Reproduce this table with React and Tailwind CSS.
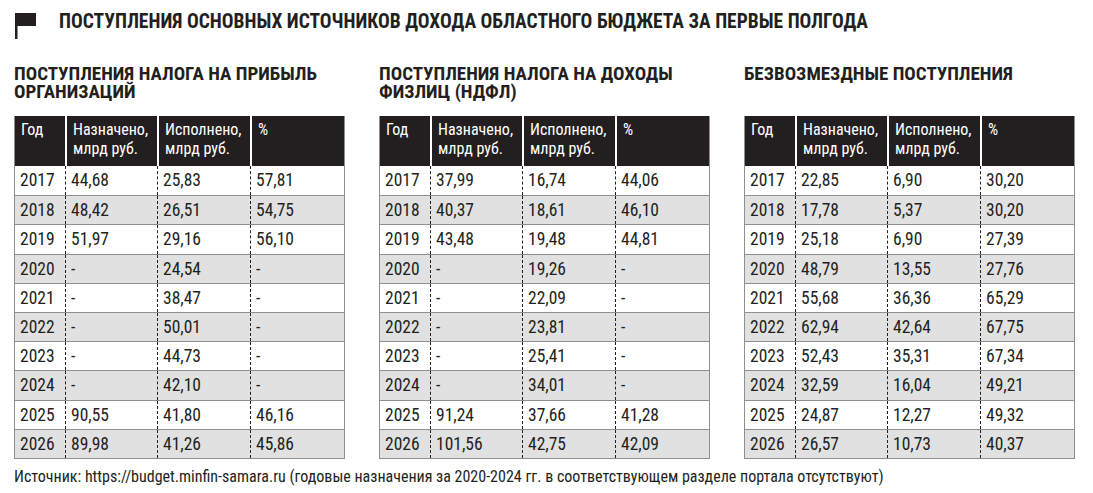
import React from 'react';

const tables = [
  {
    title: ['ПОСТУПЛЕНИЯ НАЛОГА НА ПРИБЫЛЬ', 'ОРГАНИЗАЦИЙ'],
    rows: [
      ['2017', '44,68', '25,83', '57,81'],
      ['2018', '48,42', '26,51', '54,75'],
      ['2019', '51,97', '29,16', '56,10'],
      ['2020', '-', '24,54', '-'],
      ['2021', '-', '38,47', '-'],
      ['2022', '-', '50,01', '-'],
      ['2023', '-', '44,73', '-'],
      ['2024', '-', '42,10', '-'],
      ['2025', '90,55', '41,80', '46,16'],
      ['2026', '89,98', '41,26', '45,86'],
    ],
  },
  {
    title: ['ПОСТУПЛЕНИЯ НАЛОГА НА ДОХОДЫ', 'ФИЗЛИЦ (НДФЛ)'],
    rows: [
      ['2017', '37,99', '16,74', '44,06'],
      ['2018', '40,37', '18,61', '46,10'],
      ['2019', '43,48', '19,48', '44,81'],
      ['2020', '-', '19,26', '-'],
      ['2021', '-', '22,09', '-'],
      ['2022', '-', '23,81', '-'],
      ['2023', '-', '25,41', '-'],
      ['2024', '-', '34,01', '-'],
      ['2025', '91,24', '37,66', '41,28'],
      ['2026', '101,56', '42,75', '42,09'],
    ],
  },
  {
    title: ['БЕЗВОЗМЕЗДНЫЕ ПОСТУПЛЕНИЯ'],
    rows: [
      ['2017', '22,85', '6,90', '30,20'],
      ['2018', '17,78', '5,37', '30,20'],
      ['2019', '25,18', '6,90', '27,39'],
      ['2020', '48,79', '13,55', '27,76'],
      ['2021', '55,68', '36,36', '65,29'],
      ['2022', '62,94', '42,64', '67,75'],
      ['2023', '52,43', '35,31', '67,34'],
      ['2024', '32,59', '16,04', '49,21'],
      ['2025', '24,87', '12,27', '49,32'],
      ['2026', '26,57', '10,73', '40,37'],
    ],
  },
];

const cols = 'grid grid-cols-[50px_92px_93px_1fr]';

function Flag() {
  return (
    <svg width="22" height="27" viewBox="0 0 22 27" className="shrink-0">
      <rect x="0" y="1" width="21" height="13" fill="#231f20" />
      <rect x="0" y="1" width="2.5" height="26" fill="#231f20" />
    </svg>
  );
}

function DataTable({ table }) {
  return (
    <div>
      <div className="h-[51px] text-[19px] font-bold leading-[18px]">
        {table.title.map(line => (
          <div key={line}>{line}</div>
        ))}
      </div>
      <div className="border-x border-b border-[#8f8f8f]">
        <div className={`${cols} h-[50px] bg-[#231f20] text-white text-[16px] leading-[19px]`}>
          <div className="px-[6px] pt-[4px]">Год</div>
          <div className="border-l-2 border-white px-[6px] pt-[4px]">Назначено,<br />млрд руб.</div>
          <div className="border-l-2 border-white px-[6px] pt-[4px]">Исполнено,<br />млрд руб.</div>
          <div className="border-l-2 border-white px-[6px] pt-[4px]">%</div>
        </div>
        {table.rows.map((r, i) => (
          <div
            key={r[0]}
            className={`${cols} h-[29.2px] text-[17.5px] leading-[28px] ${i % 2 ? 'bg-[#e1e1e1]' : 'bg-white'} ${i > 0 ? 'border-t border-[#8f8f8f]' : ''}`}
          >
            <div className="pl-[5px]">{r[0]}</div>
            <div className="border-l border-dashed border-[#231f20] pl-[5px]">{r[1]}</div>
            <div className="border-l border-dashed border-[#231f20] pl-[5px]">{r[2]}</div>
            <div className="border-l border-dashed border-[#231f20] pl-[5px]">{r[3]}</div>
          </div>
        ))}
      </div>
    </div>
  );
}

export default function App() {
  return (
    <div className="w-[1093px] h-[493px] bg-white text-[#231f20] px-[14px] pt-[12px] font-['Roboto',sans-serif] [font-stretch:85%]">
      <div className="flex items-start gap-[22px] pl-[1px]">
        <Flag />
        <h1 className="text-[19.5px] font-bold leading-[20px]">
          ПОСТУПЛЕНИЯ ОСНОВНЫХ ИСТОЧНИКОВ ДОХОДА ОБЛАСТНОГО БЮДЖЕТА ЗА ПЕРВЫЕ ПОЛГОДА
        </h1>
      </div>
      <div className="grid grid-cols-[331px_331px_331px] gap-x-[34px] mt-[26px]">
        {tables.map(t => (
          <DataTable key={t.title[0]} table={t} />
        ))}
      </div>
      <p className="mt-[8px] text-[16px] leading-[20px]">
        Источник: https://budget.minfin-samara.ru (годовые назначения за 2020-2024 гг. в соответствующем разделе портала отсутствуют)
      </p>
    </div>
  );
}
